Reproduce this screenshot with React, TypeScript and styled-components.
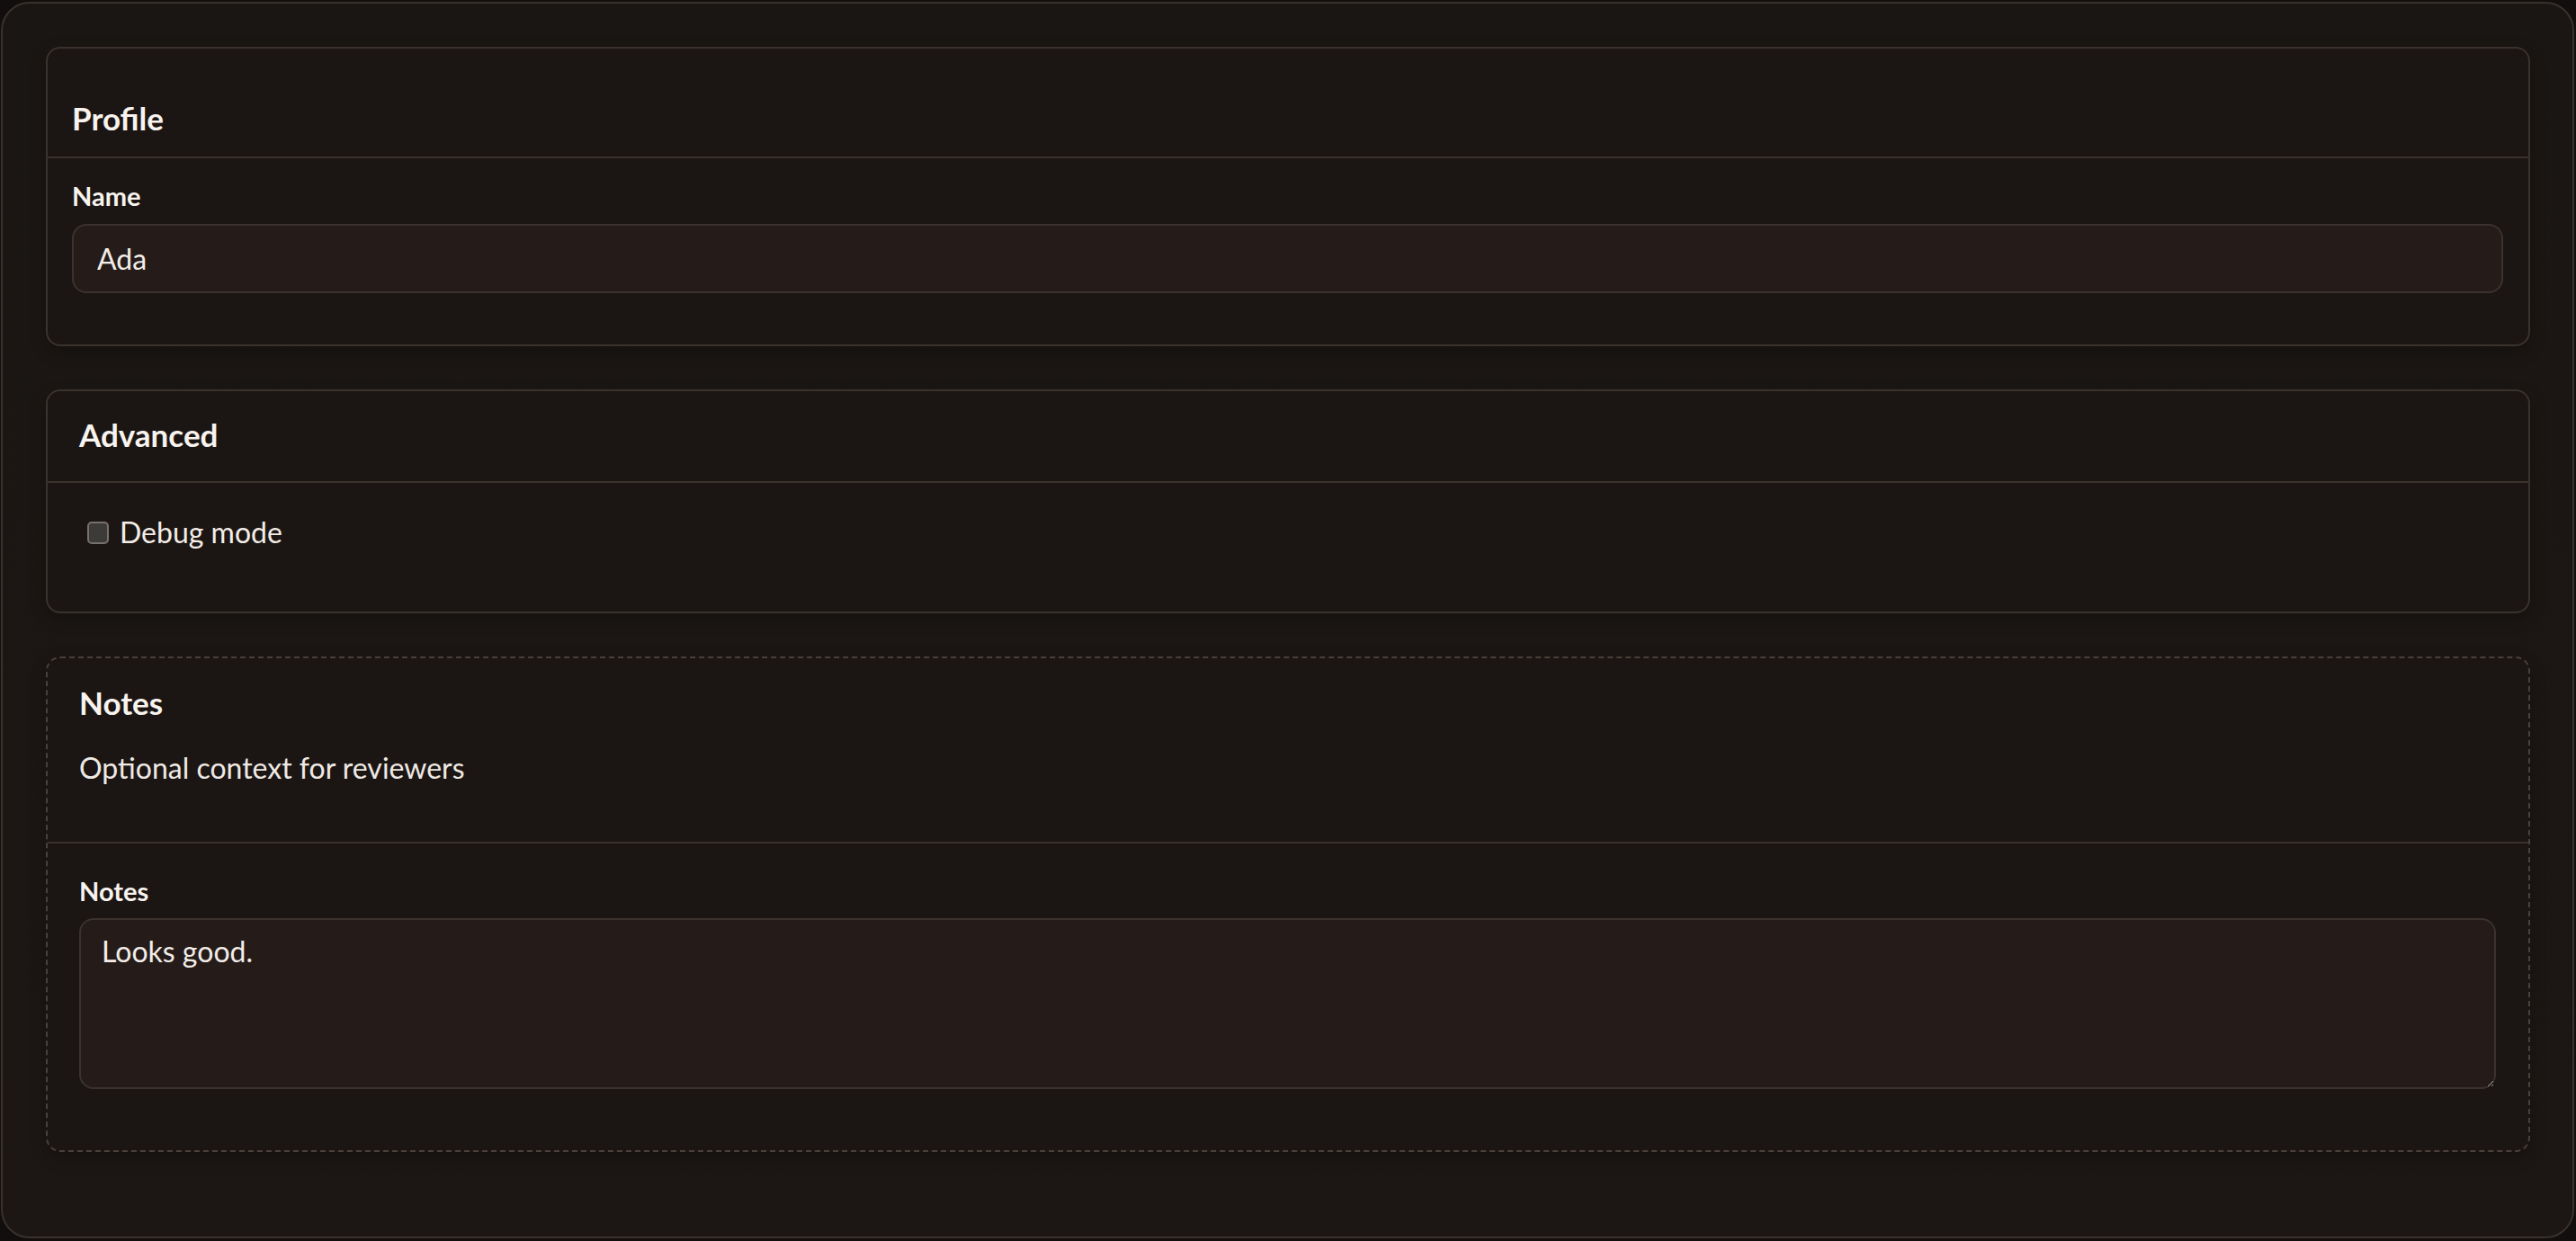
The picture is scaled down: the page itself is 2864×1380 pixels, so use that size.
import React, { useState } from "react";
import styled, { createGlobalStyle } from "styled-components";

const GlobalStyle = createGlobalStyle`
  html, body {
    margin: 0;
    padding: 0;
    background: #110e0d;
  }
  body {
    font-family: "Lato", "Liberation Sans", sans-serif;
    color: #f7f2ed;
  }
  * {
    box-sizing: border-box;
  }
`;

const Shell = styled.div`
  margin: 2px 2px 3px 1px;
  min-height: 1375px;
  border: 2px solid #3a312c;
  border-radius: 32px;
  background: linear-gradient(180deg, #1a1613 0%, #1c1714 100%);
  padding: 48px 47px 90px 48px;
  display: flex;
  flex-direction: column;
  gap: 48px;
`;

const Card = styled.section<{ $dashed?: boolean }>`
  border: 2px ${(p) => (p.$dashed ? "dashed #4a403b" : "solid #3a322d")};
  border-radius: 16px;
  background: #1b1613;
  box-shadow: 0 6px 18px rgba(0, 0, 0, 0.25);
`;

const CardHeader = styled.header<{ $pad: string }>`
  padding: ${(p) => p.$pad};
  border-bottom: 2px solid #3a322d;
`;

const Heading = styled.h2<{ $lh: number }>`
  margin: 0;
  font-size: 35px;
  line-height: ${(p) => p.$lh}px;
  font-weight: 700;
  color: #f8f3ee;
`;

const Description = styled.p`
  margin: 33px 0 0;
  font-size: 32px;
  line-height: 40px;
  color: #efe9e4;
`;

const CardBody = styled.div<{ $pad: string }>`
  padding: ${(p) => p.$pad};
`;

const FieldLabel = styled.label`
  display: block;
  font-size: 29px;
  line-height: 36px;
  font-weight: 700;
  color: #f8f3ee;
`;

const TextInput = styled.input`
  display: block;
  width: 100%;
  height: 77px;
  margin-top: 13px;
  padding: 0 26px;
  border: 2px solid #3b322e;
  border-radius: 16px;
  background: #251c1a;
  color: #f3ede8;
  font-family: inherit;
  font-size: 32px;
  outline: none;
`;

const TextArea = styled.textarea`
  display: block;
  width: 100%;
  height: 190px;
  margin-top: 12px;
  padding: 15px 23px;
  border: 2px solid #3b322e;
  border-radius: 16px;
  background: #251c1a;
  color: #f3ede8;
  color-scheme: dark;
  font-family: inherit;
  font-size: 32px;
  line-height: 40px;
  resize: vertical;
  outline: none;
`;

const CheckRow = styled.label`
  display: flex;
  align-items: center;
  gap: 12px;
  font-size: 32px;
  line-height: 40px;
  color: #f3ede8;
`;

const CheckBox = styled.input`
  appearance: none;
  margin: 0;
  width: 24px;
  height: 25px;
  border: 2px solid #77706c;
  border-radius: 5px;
  background: #3d3b3a;

  &:checked {
    background: #8a7f78;
  }
`;

export default function App() {
  const [name, setName] = useState("Ada");
  const [debug, setDebug] = useState(false);
  const [notes, setNotes] = useState("Looks good.");

  return (
    <>
      <GlobalStyle />
      <Shell>
        <Card>
          <CardHeader $pad="55px 27px 21px">
            <Heading $lh={44}>Profile</Heading>
          </CardHeader>
          <CardBody $pad="24px 28px 57px 27px">
            <FieldLabel htmlFor="name">Name</FieldLabel>
            <TextInput id="name" value={name} onChange={(e) => setName(e.target.value)} />
          </CardBody>
        </Card>

        <Card>
          <CardHeader $pad="28px 35px 32px">
            <Heading $lh={40}>Advanced</Heading>
          </CardHeader>
          <CardBody $pad="35px 35px 68px 44px">
            <CheckRow>
              <CheckBox type="checkbox" checked={debug} onChange={(e) => setDebug(e.target.checked)} />
              Debug mode
            </CheckRow>
          </CardBody>
        </Card>

        <Card $dashed>
          <CardHeader $pad="29px 35px 62px">
            <Heading $lh={40}>Notes</Heading>
            <Description>Optional context for reviewers</Description>
          </CardHeader>
          <CardBody $pad="35px 36px 68px 35px">
            <FieldLabel htmlFor="notes">Notes</FieldLabel>
            <TextArea id="notes" value={notes} onChange={(e) => setNotes(e.target.value)} />
          </CardBody>
        </Card>
      </Shell>
    </>
  );
}
